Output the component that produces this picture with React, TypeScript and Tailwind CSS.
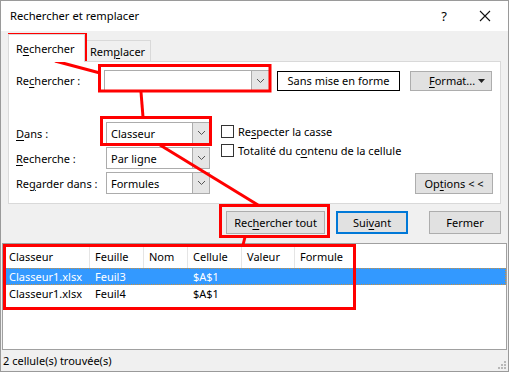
import type { ReactNode } from 'react'

const Chevron = () => (
  <svg width="9" height="6" viewBox="0 0 9 6">
    <path d="M1 1 L4.5 4.5 L8 1" fill="none" stroke="#555" strokeWidth="1" />
  </svg>
)

function Combo({ value, width }: { value?: string; width: string }) {
  return (
    <div className={`flex h-[22px] ${width} border border-[#acacac] bg-white`}>
      <div className="flex flex-1 items-center pl-[4px] text-black">{value}</div>
      <div className="flex w-[17px] items-center justify-center border-l border-[#acacac] bg-[#e5e5e5]">
        <Chevron />
      </div>
    </div>
  )
}

function U({ children }: { children: ReactNode }) {
  return <span className="underline decoration-1 underline-offset-2">{children}</span>
}

function Checkbox({ children }: { children: ReactNode }) {
  return (
    <div className="flex h-[19px] items-center gap-[4px]">
      <div className="h-[13px] w-[13px] border border-[#333] bg-white" />
      <span>{children}</span>
    </div>
  )
}

const cols = [
  { name: 'Classeur', w: 'w-[86px]' },
  { name: 'Feuille', w: 'w-[54px]' },
  { name: 'Nom', w: 'w-[44px]' },
  { name: 'Cellule', w: 'w-[54px]' },
  { name: 'Valeur', w: 'w-[53px]' },
  { name: 'Formule', w: 'w-[61px]' },
]

const rows = [
  ['Classeur1.xlsx', 'Feuil3', '', '$A$1', '', ''],
  ['Classeur1.xlsx', 'Feuil4', '', '$A$1', '', ''],
]

export default function App() {
  return (
    <div className="relative flex h-[372px] w-[509px] flex-col overflow-hidden border border-[#9a9a9a] bg-[#f0f0f0] font-['Noto_Sans',sans-serif] text-[11px] leading-none text-black">
      {/* TITLE BAR */}
      <div className="flex h-[30px] shrink-0 items-center bg-white pl-[9px]">
        <span className="text-[11.2px]">Rechercher et remplacer</span>
        <span className="ml-auto mr-[32px] text-[13px]">?</span>
        <svg width="12" height="12" viewBox="0 0 12 12" className="mr-[17px]">
          <path d="M1 1 L11 11 M11 1 L1 11" stroke="#111" strokeWidth="1.1" />
        </svg>
      </div>

      {/* TABS */}
      <div className="flex h-[30px] shrink-0 items-end pl-[7px]">
        <div className="relative z-10 -mb-px flex h-[28px] w-[77px] items-center border border-b-0 border-[#d9d9d9] bg-white pl-[7px]">
          R<U>e</U>chercher
        </div>
        <div className="flex h-[21px] w-[66px] items-center border border-b-0 border-l-0 border-[#d9d9d9] pl-[5px]">
          Rem<U>p</U>lacer
        </div>
      </div>

      {/* PANEL */}
      <div className="mx-[7px] flex h-[143px] shrink-0 flex-col border border-[#d9d9d9] bg-white pl-[7px] pr-[7px] pt-[8px]">
        <div className="flex h-[21px] items-center">
          <span className="w-[88px]">
            Re<U>c</U>hercher :
          </span>
          <div className="flex h-[21px] w-[166px] border border-[#acacac] bg-white">
            <div className="flex-1" />
            <div className="flex w-[18px] items-center justify-center border-l border-[#acacac] bg-[#e5e5e5]">
              <Chevron />
            </div>
          </div>
          <div className="ml-[7px] flex h-[20px] w-[123px] items-center justify-center border border-black bg-white">
            Sans mise en forme
          </div>
          <div className="ml-[10px] flex h-[20px] w-[82px] items-center border border-[#adadad] bg-[#e1e1e1] pl-[18px] pr-[6px]">
            <span>
              <U>F</U>ormat...
            </span>
            <svg width="7" height="4" viewBox="0 0 7 4" className="ml-auto">
              <path d="M0 0 L7 0 L3.5 4 Z" fill="#222" />
            </svg>
          </div>
        </div>

        <div className="mt-[31px] flex">
          <div className="flex flex-col gap-[3px]">
            <div className="flex items-center">
              <span className="w-[90px]">
                <U>D</U>ans :
              </span>
              <Combo value="Classeur" width="w-[104px]" />
            </div>
            <div className="flex items-center">
              <span className="w-[90px]">
                <U>R</U>echerche :
              </span>
              <Combo value="Par ligne" width="w-[104px]" />
            </div>
            <div className="flex items-center">
              <span className="w-[90px]">
                Re<U>g</U>arder dans :
              </span>
              <Combo value="Formules" width="w-[104px]" />
            </div>
          </div>
          <div className="ml-[11px] flex flex-1 flex-col">
            <Checkbox>
              Re<U>s</U>pecter la casse
            </Checkbox>
            <Checkbox>
              Totalité du c<U>o</U>ntenu de la cellule
            </Checkbox>
            <div className="mt-[13px] flex h-[21px] w-[78px] items-center justify-center self-end border border-[#adadad] bg-[#e1e1e1]">
              Op<U>t</U>ions &lt; &lt;
            </div>
          </div>
        </div>
      </div>

      {/* BUTTONS */}
      <div className="mt-[7px] flex shrink-0 justify-end pr-[7px]">
        <div className="flex h-[23px] w-[99px] items-center justify-center border border-[#adadad] bg-[#e1e1e1]">
          Rec<U>h</U>ercher tout
        </div>
        <div className="ml-[11px] flex h-[23px] w-[72px] items-center justify-center border-2 border-[#0078d7] bg-[#e1e1e1]">
          Sui<U>v</U>ant
        </div>
        <div className="ml-[21px] flex h-[23px] w-[72px] items-center justify-center border border-[#adadad] bg-[#e1e1e1]">
          Fermer
        </div>
      </div>

      {/* RESULTS */}
      <div className="mx-px mt-[9px] flex-1 border border-[#a0a0a0] bg-white pl-px">
        <div className="flex h-[24px]">
          {cols.map((c) => (
            <div key={c.name} className={`${c.w} flex items-center border-r border-[#e5e5e5] pl-[5px] last:border-r-0`}>
              {c.name}
            </div>
          ))}
        </div>
        {rows.map((r, i) => (
          <div
            key={i}
            className={`flex h-[17px] ${i === 0 ? 'border border-dotted border-[#c9903f] bg-[#3399ff] text-white' : 'border border-transparent'}`}
          >
            {r.map((cell, j) => (
              <div key={j} className={`${cols[j].w} flex items-center pl-[4px]`}>
                {cell}
              </div>
            ))}
          </div>
        ))}
      </div>

      {/* STATUS */}
      <div className="flex h-[21px] shrink-0 items-center pl-[2px]">
        <span>2 cellule(s) trouvée(s)</span>
        <svg width="10" height="10" viewBox="0 0 10 10" className="ml-auto mr-[1px] mt-[8px]">
          <rect x="7" y="1" width="2" height="2" fill="#b8b8b8" />
          <rect x="4" y="4" width="2" height="2" fill="#b8b8b8" />
          <rect x="7" y="4" width="2" height="2" fill="#b8b8b8" />
          <rect x="1" y="7" width="2" height="2" fill="#b8b8b8" />
          <rect x="4" y="7" width="2" height="2" fill="#b8b8b8" />
          <rect x="7" y="7" width="2" height="2" fill="#b8b8b8" />
        </svg>
      </div>

      {/* RED ANNOTATIONS */}
      <svg
        width="509"
        height="372"
        viewBox="0 0 509 372"
        className="pointer-events-none absolute left-[-1px] top-[-1px]"
      >
        <g fill="none" stroke="#ff0000" strokeWidth="3">
          <rect x="9.5" y="34.5" width="76" height="25" />
          <rect x="99.5" y="65.5" width="170.5" height="25.5" />
          <rect x="101.5" y="117.5" width="109" height="27" />
          <rect x="220.5" y="205.5" width="108" height="31" />
          <rect x="4.5" y="245.5" width="350" height="63" />
          <line x1="55" y1="61" x2="100" y2="73" />
          <line x1="141" y1="92" x2="143" y2="117" />
          <line x1="160" y1="145" x2="258" y2="205" />
          <line x1="245" y1="237" x2="243" y2="245" />
        </g>
      </svg>
    </div>
  )
}
